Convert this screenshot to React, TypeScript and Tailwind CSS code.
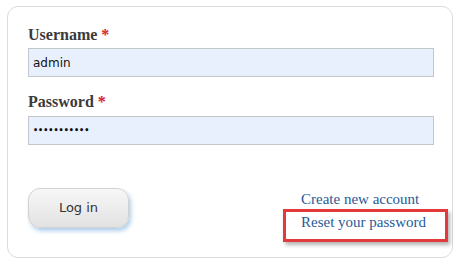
import React from "react";

export default function App() {
  const serif = { fontFamily: '"Liberation Serif", "Times New Roman", serif' };
  const sans = { fontFamily: '"DejaVu Sans", Verdana, sans-serif' };
  return (
    <div className="w-[462px] h-[268px] bg-white pt-[6px] pl-[7px]">
      <div className="w-[446px] h-[252px] border border-[#dcdcdc] rounded-[11px] pl-[20px] pr-[18px] pt-[19px] flex flex-col">
        <label className="text-[16px] leading-[18px] font-bold text-[#3a3a3a] mb-[4px]" style={serif}>
          Username <span className="text-[#d8232a]">*</span>
        </label>
        <div
          className="h-[29px] border border-[#c3c7cc] bg-[#e8f0fe] pl-[4px] flex items-center text-[12px] text-[#111]"
          style={sans}
        >
          admin
        </div>
        <label className="text-[16px] leading-[18px] font-bold text-[#3a3a3a] mt-[16px] mb-[5px]" style={serif}>
          Password <span className="text-[#d8232a]">*</span>
        </label>
        <div
          className="h-[29px] border border-[#c3c7cc] bg-[#e8f0fe] pl-[4px] flex items-center text-[8px] font-bold text-[#111]"
          style={sans}
        >
          •••••••••••
        </div>
        <div className="flex items-start gap-[172px] mt-[43px]">
          <button
            className="w-[101px] h-[40px] rounded-[12px] border border-[#d2d2d2] bg-gradient-to-b from-[#f7f7f7] to-[#e2e2e2] text-[13px] text-[#333] shadow-[2px_3px_4px_rgba(110,170,220,0.55)]"
            style={sans}
          >
            Log in
          </button>
          <div className="flex flex-col text-[15px] leading-[23px] text-[#275a97]" style={serif}>
            <a className="whitespace-nowrap">Create new account</a>
            <div className="relative">
              <a className="whitespace-nowrap">Reset your password</a>
              <span className="absolute -left-[18px] -right-[22px] -top-[2px] -bottom-[8px] border-[3px] border-[#e2393d] shadow-[2px_3px_4px_rgba(0,0,0,0.3)] pointer-events-none" />
            </div>
          </div>
        </div>
      </div>
    </div>
  );
}
